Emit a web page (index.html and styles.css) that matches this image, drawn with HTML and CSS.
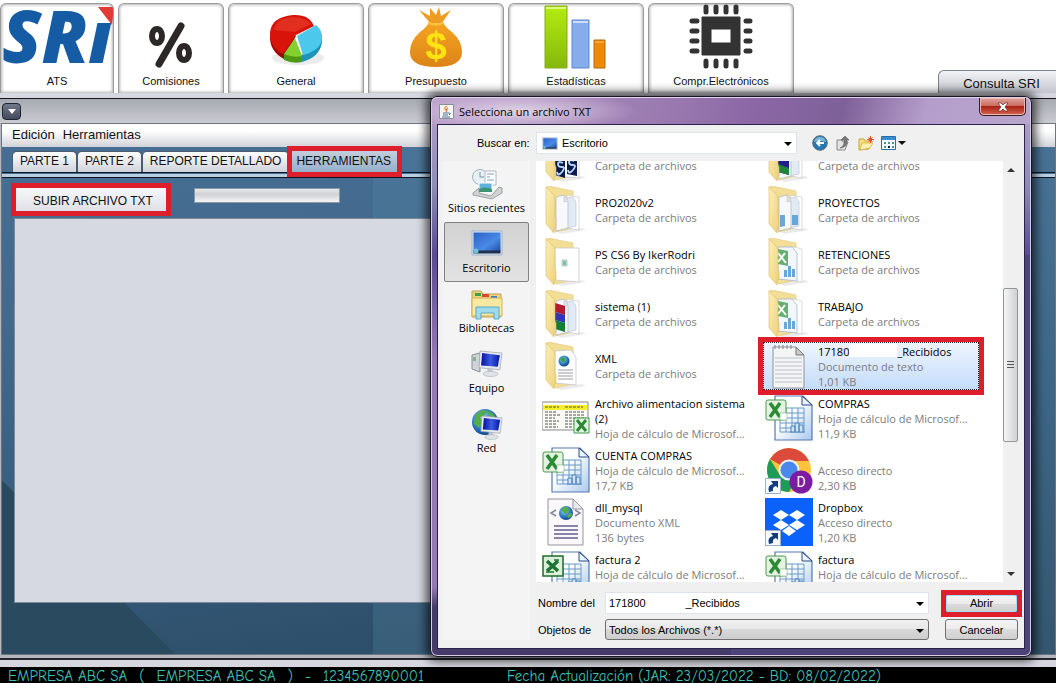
FILE: index.html
```html
<!DOCTYPE html>
<html lang="es">
<head>
<meta charset="utf-8">
<title>ATS - Herramientas</title>
<link rel="stylesheet" href="styles.css">
</head>
<body>
<svg class="defs" aria-hidden="true">
  <defs>
    <linearGradient id="gFlap" x1="0" x2="1" y1="0" y2="1"><stop offset="0" stop-color="#fdf0b4"/><stop offset="1" stop-color="#ecd07a"/></linearGradient>
    <linearGradient id="gSheet" x1="0" x2="1" y1="0" y2="1"><stop offset="0.4" stop-color="#ffffff"/><stop offset="1" stop-color="#a9c8ee"/></linearGradient>
    <linearGradient id="gScreen" x1="0" x2="1" y1="0" y2="1"><stop offset="0" stop-color="#2a62c4"/><stop offset="0.6" stop-color="#4a8ae8"/><stop offset="1" stop-color="#1c4c9c"/></linearGradient>
    <linearGradient id="gMonitor" x1="0" x2="1" y1="0" y2="0"><stop offset="0" stop-color="#0610a0"/><stop offset="0.5" stop-color="#3c5ce0"/><stop offset="1" stop-color="#0414a8"/></linearGradient>
    <radialGradient id="gGlobe" cx="0.4" cy="0.35" r="0.7"><stop offset="0" stop-color="#9ad8f8"/><stop offset="0.6" stop-color="#2a78c4"/><stop offset="1" stop-color="#0c3c84"/></radialGradient>
    <linearGradient id="gBag" x1="0" x2="0" y1="0" y2="1"><stop offset="0" stop-color="#f6a423"/><stop offset="1" stop-color="#dc8418"/></linearGradient>
    <linearGradient id="gGreen" x1="0" x2="0" y1="0" y2="1"><stop offset="0" stop-color="#b4ec10"/><stop offset="1" stop-color="#86b80c"/></linearGradient>
    <symbol id="back" viewBox="0 0 48 48">
      <path d="M12 45 40 42 44 44 20 48z" fill="#000" opacity=".08"/>
      <path d="M4 1 7 0 31 5 32 42 13 46z" fill="#f3de96" stroke="#e0c87c" stroke-width=".6"/>
    </symbol>
    <symbol id="flap" viewBox="0 0 48 48">
      <path d="M4 1 10 7Q13 9 13 12V31L14 33V41L12 43V47L4 38z" fill="url(#gFlap)" stroke="#d9bd66" stroke-width=".6"/>
    </symbol>
    <symbol id="papers" viewBox="0 0 48 48">
      <path d="M25 9 37 11V44L25 42z" fill="#fff" stroke="#c4c8cc" stroke-width=".7"/>
      <path d="M25 12 31 11 34 16V40L25 42z" fill="#e2ebf5" stroke="#b8c0ca" stroke-width=".6"/>
      <path d="M14 11 22 9 26 15V42L14 45z" fill="#f6f8fa" stroke="#b0b6bc" stroke-width=".7"/>
      <path d="M22 9V16L26 15" fill="#dfe5ec" stroke="#b0b6bc" stroke-width=".5"/>
    </symbol>
    <symbol id="onepaper" viewBox="0 0 48 48">
      <path d="M13 10 37 10V44L13 42z" fill="#fff" stroke="#c4c8cc" stroke-width=".8"/>
    </symbol>
    <symbol id="f-ps" viewBox="0 0 48 48"><use href="#back"/><use href="#onepaper"/><path d="M13 8 23 10V44L13 41zM25 10 35 10V42L25 40z" fill="#0a1a4c"/><path d="M21 29q-5-2-5 1t4 3 0 5-5 0M32 27q-5-2-5 1t4 3 0 5-5 0" fill="none" stroke="#b8d8f8" stroke-width="1.800"/><use href="#flap"/></symbol>
    <symbol id="f-img" viewBox="0 0 48 48"><use href="#back"/><use href="#papers"/><path d="M13 10 24 12V41L13 38z" fill="#20208c"/><path d="M13 30 24 34V41L13 38z" fill="#20843c"/><use href="#flap"/></symbol>
    <symbol id="f-papers" viewBox="0 0 48 48"><use href="#back"/><use href="#papers"/><use href="#flap"/></symbol>
    <symbol id="f-charts" viewBox="0 0 48 48"><use href="#back"/><use href="#papers"/><path d="M15 29h5v11l-5 1zM27 29h6v10h-6z" fill="#6aa6d8"/><use href="#flap"/></symbol>
    <symbol id="f-small" viewBox="0 0 48 48"><use href="#back"/><use href="#onepaper"/><path d="M20 22h5v6h-5z" fill="#d4ece4" stroke="#8abcae" stroke-width=".7"/><path d="M21 24h3M21 26h3" stroke="#2a8866"/><use href="#flap"/></symbol>
    <symbol id="f-rar" viewBox="0 0 48 48"><use href="#back"/><use href="#papers"/><path d="M13 13 23 16V25L13 22z" fill="#b01c30"/><path d="M13 22 23 25V33L13 30z" fill="#3434b4"/><path d="M13 30 23 33V42L13 39z" fill="#147c34"/><use href="#flap"/></symbol>
    <symbol id="f-xml" viewBox="0 0 48 48"><use href="#back"/><path d="M13 9 29 8 34 15V43L13 41z" fill="#fff" stroke="#c4c8cc" stroke-width=".8"/><circle cx="22" cy="19" r="5.500" fill="url(#gGlobe)"/><path d="M18 17q4-4 5 0t-3 3z" fill="#3aa04a"/><path d="M16 28h15M16 31h15M16 34h15M16 37h15" stroke="#9a9aa4"/><use href="#flap"/></symbol>
    <symbol id="f-xls" viewBox="0 0 48 48"><use href="#back"/><path d="M24 8 37 11V44L24 42z" fill="#fff" stroke="#c4c8cc" stroke-width=".6"/><path d="M13 9 27 9 32 15V43L13 41z" fill="#f2f7fc" stroke="#a8b6c6" stroke-width=".8"/><path d="M13 11 23 13V28L13 26z" fill="#64b070"/><path d="m13 15 8 10M20 15l-7 9" stroke="#fff" stroke-width="2"/><path d="M19 32h3v7h-3zM23 28h3v11h-3zM27 31h3v8h-3z" fill="#6aa6d8"/><use href="#flap"/></symbol>
    <symbol id="sheet" viewBox="0 0 48 48">
      <path d="M10 2H38L47 11V46H10z" fill="url(#gSheet)" stroke="#5478b4" stroke-width="1.200"/>
      <path d="M37 2V11H47z" fill="#eaf2fc" stroke="#2c4c84"/>
      <path d="M15 14H39V38H15zM15 19H39M15 24H39M15 29H39M15 34H39M21 14V38M27 14V38M33 14V38" fill="none" stroke="#6a9ac8"/>
      <path d="M26 38V32h4v6M30 38V29h4v9M34 38V31h4v7M25 38h15" fill="#cfe2f6" stroke="#4c84bc"/>
    </symbol>
    <symbol id="xl-new" viewBox="0 0 48 48"><use href="#sheet"/><rect x="1" y="6" width="20" height="20" rx="2" fill="#e4f2e2" stroke="#4c9a50"/><path d="m5 9 10 14M15 9 5 23" stroke="#2c8a34" stroke-width="3.500"/><path d="M15 19h7v7h-7z" fill="#fff" stroke="#7ab47c" stroke-width=".6"/></symbol>
    <symbol id="xl-old" viewBox="0 0 48 48"><use href="#sheet"/><rect x="1" y="6" width="20" height="20" fill="#dcefd8" stroke="#1c6c2c" stroke-width="1.500"/><path d="m5 11 11 10M16 11 5 21" stroke="#1c7434" stroke-width="3.500"/><path d="M4 22h8M12 10h5" stroke="#1c7434" stroke-width="1.500"/></symbol>
    <symbol id="shortcut" viewBox="0 0 16 16"><path d="M.5 .5h15v15H.5z" fill="#f6fafe" stroke="#9ab0c4"/><path d="M4 14Q2 7 8 6L6 3H13V10L11 8Q7 9 8 13z" fill="#123c7c"/></symbol>
    <symbol id="monitor" viewBox="0 0 24 26"><path d="M2 1 23 3 21 19 1 17z" fill="#e8ecf2" stroke="#a4aab4" stroke-width=".8"/><path d="M4 3 21 5 19 16 3 15z" fill="url(#gMonitor)"/><path d="M9 18h5v3H9z" fill="#c0c6cf"/><ellipse cx="12" cy="23" rx="7" ry="2.500" fill="#dfe3e8" stroke="#a8aeb8" stroke-width=".6"/></symbol>
    <symbol id="desktop" viewBox="0 0 32 26"><path d="M1 1h30v24H1z" fill="#d8e4f4" stroke="#a4b4cc"/><path d="M2.500 2.500h27v19h-27z" fill="url(#gScreen)"/><path d="M2.500 20.500h27v3h-27z" fill="#20304c"/><circle cx="5" cy="21" r="2.500" fill="#6cc0d8"/></symbol>
  </defs>
</svg>

<header class="toolbar">
  <button class="tool t-ats"><svg width="112" height="66" viewBox="0 0 112 66"><text x="1" y="60" class="sri">SRı</text><path d="M97 4H113L111 22z" fill="#e03a34"/></svg>ATS</button>
  <button class="tool t-com"><svg width="44" height="64" viewBox="0 0 44 64"><g fill="none" stroke="#2c2828"><ellipse cx="8" cy="31" rx="5" ry="7" stroke-width="6"/><ellipse cx="35" cy="48" rx="5" ry="7" stroke-width="6"/><path d="M32 21 10 59" stroke-width="7" stroke-linecap="round"/></g></svg>Comisiones</button>
  <button class="tool t-gen"><svg width="60" height="64" viewBox="0 -3 60 64"><ellipse cx="32" cy="50" rx="26" ry="7" fill="#000" opacity=".08"/><path d="M4 27Q3 43 18 51L30 28z" fill="#9c0c06"/><path d="M4 25Q4 40 17 46L30 27 48 18Q43 6 27 7 5 9 4 25z" fill="#d8140a"/><path d="M8 22Q10 10 27 9q12 0 18 7l-16 8z" fill="#e8402c" opacity=".6"/><path d="M18 46v6q9 4 18 2v-7z" fill="#4c9a14"/><path d="M29 30 18 46q9 4 18 2z" fill="#84d02c"/><path d="M36 47v7q18-5 20-20v-8z" fill="#1c94b8"/><path d="M31 28 50 17q6 5 6 12 0 13-19 18z" fill="#4cc8ec"/></svg>General</button>
  <button class="tool t-pre"><svg width="56" height="64" viewBox="0 0 56 64"><path d="M22 18 11 5l11 6 0-8 6 7 3-8 2 9 10-6-9 13z" fill="#ee9c22"/><path d="M21 17q7 3 14 0 2 5 9 10 10 9 10 20 0 15-26 15T2 47Q2 36 12 27q7-5 9-10z" fill="url(#gBag)"/><path d="M20 18q8 3 15 0" fill="none" stroke="#fcc43a" stroke-width="2"/><text x="28" y="54" class="money">$</text></svg>Presupuesto</button>
  <button class="tool t-est"><svg width="64" height="64" viewBox="0 0 64 64"><path d="M1 1h22v62H1z" fill="url(#gGreen)" stroke="#84ac18"/><path d="M2 3h20" stroke="#dcfa84" stroke-width="2"/><path d="M28 15h17v48H28z" fill="#86acec" stroke="#5c88d0"/><path d="M29 17h15" stroke="#d0e0fa" stroke-width="2"/><path d="M50 35h11v28H50z" fill="#ee8a08" stroke="#b8690c"/><path d="M51 37h9" stroke="#fac470"/></svg>Estadísticas</button>
  <button class="tool t-cpr"><svg width="66" height="66" viewBox="0 -1 66 66"><path d="M14 13h38v38H14zM23 25v14h20V25z" fill="#333" fill-rule="evenodd" stroke="#333" stroke-linejoin="round"/><path d="M18 3v5M28 3v5M38 3v5M48 3v5M18 57v5M28 57v5M38 57v5M48 57v5M4 17h5M4 27h5M4 37h5M4 47h5M58 17h4M58 27h4M58 37h4M58 47h4" stroke="#333" stroke-width="5" stroke-linecap="round"/></svg>Compr.Electrónicos</button>
  <button class="consulta">Consulta SRI</button>
</header>

<main class="frame">
  <div class="frame-title"><button class="frame-menu" aria-label="Menú de ventana"><svg width="8" height="5" viewBox="0 0 8 5"><path d="M0 0h8L4 5z" fill="#fff"/></svg></button></div>
  <div class="frame-inner">
    <nav class="menubar"><button>Edición</button><button>Herramientas</button></nav>
    <div class="tabs" role="tablist">
      <button role="tab">PARTE 1</button><button role="tab">PARTE 2</button><button role="tab">REPORTE DETALLADO</button><button role="tab" class="active marked" aria-selected="true">HERRAMIENTAS</button>
    </div>
    <section class="work">
      <div class="actions"><button class="upload marked">SUBIR ARCHIVO TXT</button><progress value="0" max="100" aria-label="Progreso"></progress></div>
      <div class="output"></div>
    </section>
  </div>
</main>

<footer class="status">
  <span>EMPRESA ABC SA</span><span>(</span><span>EMPRESA ABC SA</span><span>)</span><span>-</span><span>1234567890001</span>
  <span class="updated">Fecha Actualización (JAR: 23/03/2022 - BD: 08/02/2022)</span>
</footer>

<div class="dialog" role="dialog" aria-labelledby="dlg-title">
  <div class="dlg-bar">
    <svg width="15" height="15" viewBox="0 0 15 15"><path d="M.5.500h14v14H.5z" fill="#f6f4f2" stroke="#8890a0"/><path d="M8 2q-4 2-1 4 1 1 0 2M9 4q-2 1-1 3" fill="none" stroke="#e47c2c" stroke-width="1.200"/><path d="M4 9h6M4 11h5M3 13h8M10 9q3 0 0 2" fill="none" stroke="#50749c"/></svg>
    <h1 id="dlg-title">Selecciona un archivo TXT</h1>
    <button class="close" aria-label="Cerrar"><svg width="12" height="10" viewBox="0 0 12 10"><path d="M1 1h3l2 2 2-2h3L8 5l3 4H8L6 7 4 9H1l3-4z" fill="#fff" stroke="#5c3030" stroke-width=".7"/></svg></button>
  </div>
  <div class="dlg-body">
    <div class="lookup">
      <label for="folder">Buscar en:</label>
      <div class="combo folder"><svg width="16" height="13"><use href="#desktop"/></svg><select id="folder"><option>Escritorio</option></select></div>
      <div class="nav">
        <button aria-label="Atrás"><svg width="16" height="16" viewBox="0 0 16 16"><circle cx="8" cy="8" r="7.300" fill="#2578b0" stroke="#5c6c80"/><path d="M2 7Q3 2 8 2t6 5q-6-2-12 0z" fill="#9cd0ea" opacity=".7"/><path d="M12 8H5M8 5 5 8l3 3" fill="none" stroke="#fff" stroke-width="1.800"/></svg></button>
        <button aria-label="Subir un nivel"><svg width="16" height="16" viewBox="0 0 16 16"><path d="M2 5h5l1 2h5l-3 8H2z" fill="#e4e4e4" stroke="#888"/><path d="M5 13q5-2 4-8H6l4-4 4 4h-2q1 7-7 8z" fill="#777" stroke="#555" stroke-width=".5"/></svg></button>
        <button aria-label="Nueva carpeta"><svg width="16" height="16" viewBox="0 0 16 16"><path d="M1 4h5l1 2h6v2l-2 6-10 1z" fill="#f6dc84" stroke="#c8a43c"/><path d="m2 15 2-7h11l-3 5z" fill="#fdf0b0" stroke="#d0ac44" stroke-width=".7"/><path d="M12.500 1v7M9 4.500h7M10.500 2.500l4 4M14.500 2.500l-4 4" stroke="#e4501c"/></svg></button>
        <button aria-label="Vistas"><svg width="25" height="15" viewBox="0 0 25 15"><path d="M.5.500h14v13H.5z" fill="#f4faff" stroke="#2c6ca8"/><path d="M1 1h13v3H1z" fill="#3c8cd0"/><path d="M3 6h2v2H3zM7 6h2v2H7zM11 6h2v2h-2zM3 10h2v2H3zM11 10h2v2h-2z" fill="#54947c"/><path d="M7 10h2v2H7z" fill="#124"/><path d="M17 5h8l-4 4z" fill="#111"/></svg></button>
      </div>
    </div>
    <div class="dlg-main">
      <nav class="places">
        <button><svg width="32" height="32" viewBox="0 0 32 32"><circle cx="9" cy="9" r="7.500" fill="#e8f0f6" stroke="#a4b4c0"/><path d="M9 4v5h4" fill="none" stroke="#7890a4"/><path d="M14 3h11v14H14z" fill="#fff" stroke="#b0b8c0"/><path d="M16 6h7M16 9h3M16 12h7" stroke="#78a0c4"/><path d="M8 15h13v9H8z" fill="#5cb0dc" stroke="#fff"/><path d="M8 21q6-3 13 0v3H8z" fill="#3c9474"/><path d="m2 25 6-5v5l12 3 8-9 3 1v5l-10 6-19-4z" fill="#d0d2d4" stroke="#8c9094" stroke-width=".8"/></svg>Sitios recientes</button>
        <button class="current"><svg width="32" height="32" viewBox="0 0 32 32"><use href="#desktop" y="2" width="32" height="26"/></svg>Escritorio</button>
        <button><svg width="32" height="32" viewBox="0 0 32 32"><path d="M1 3h9l2 3h18v23H1z" fill="#ecd27c" stroke="#c0a450"/><path d="M4 5h6v3H4z" fill="#3ca04c"/><path d="M11 6h7v3h-7z" fill="#d84c2c"/><path d="M20 8h6v2h-6z" fill="#3c7cc0"/><path d="M1 10h30v18H1z" fill="#f8e8a0" stroke="#d0b458"/><path d="M5 19h23v12h-5v-6H10v6H5z" fill="#a0dcec" stroke="#58a8c4"/></svg>Bibliotecas</button>
        <button><svg width="32" height="32" viewBox="0 0 32 32"><path d="m1 7 8-2v19l-8-3z" fill="#d0d4d8" stroke="#888f98"/><path d="M2 10h3M2 12h3" stroke="#2c9c3c"/><use href="#monitor" x="7" y="1" width="25" height="29"/></svg>Equipo</button>
        <button><svg width="32" height="32" viewBox="0 0 32 32"><circle cx="14" cy="14" r="13" fill="url(#gGlobe)"/><path d="M4 8q6-8 12-5l-3 5-4 1 3 5-4 6-5-4zM16 3q7 1 9 8l-6-2z" fill="#54ac4c"/><use href="#monitor" x="9" y="6" width="23" height="27"/></svg>Red</button>
      </nav>
      <div class="right">
        <div class="files">
          <ul>
            <li><svg><use href="#f-ps"/></svg><p><b>&nbsp;</b>Carpeta de archivos</p></li>
            <li><svg><use href="#f-img"/></svg><p><b>&nbsp;</b>Carpeta de archivos</p></li>
            <li><svg><use href="#f-papers"/></svg><p><b>PRO2020v2</b>Carpeta de archivos</p></li>
            <li><svg><use href="#f-charts"/></svg><p><b>PROYECTOS</b>Carpeta de archivos</p></li>
            <li><svg><use href="#f-small"/></svg><p><b>PS CS6 By IkerRodri</b>Carpeta de archivos</p></li>
            <li><svg><use href="#f-xls"/></svg><p><b>RETENCIONES</b>Carpeta de archivos</p></li>
            <li><svg><use href="#f-rar"/></svg><p><b>sistema (1)</b>Carpeta de archivos</p></li>
            <li><svg><use href="#f-xls"/></svg><p><b>TRABAJO</b>Carpeta de archivos</p></li>
            <li><svg><use href="#f-xml"/></svg><p><b>XML</b>Carpeta de archivos</p></li>
            <li class="selected marked"><svg viewBox="0 0 48 48"><path d="M8 5H31L39 13V46H8z" fill="#f4f4f4" stroke="#909498"/><path d="M10 16h27M10 20h27M10 24h27M10 28h27M10 32h27M10 36h27M10 40h27" stroke="#b8c0ca"/><path d="M31 5v8h8z" fill="#ccc" stroke="#777"/><path d="M10 3v4M14 3v4M18 3v4M22 3v4M26 3v4" stroke="#888"/></svg><p><b>17180<i></i>_Recibidos</b>Documento de texto<br>1,01 KB</p></li>
            <li><svg viewBox="0 0 48 48"><path d="M0 8h46v28H0z" fill="#fafaf6" stroke="#888"/><path d="M1 11h44v5H1z" fill="#f6ee2c"/><path d="M3 13h14M23 13h18M3 18h12M3 21h15M3 24h10M3 27h14M3 30h11M3 33h13M23 18h20M23 21h19M23 24h21M23 27h18M23 30h10M23 33h8" stroke="#55554c" stroke-width="1.200" stroke-dasharray="3 1"/><path d="M32 24h15v15H32z" fill="#e4f4e2" stroke="#3c9a44"/><path d="m35 26 9 11M44 26l-9 11" stroke="#2c8a34" stroke-width="3"/></svg><p><b>Archivo alimentacion sistema (2)</b>Hoja de cálculo de Microsof...</p></li>
            <li><svg><use href="#xl-new"/></svg><p><b>COMPRAS</b>Hoja de cálculo de Microsof...<br>11,9 KB</p></li>
            <li><svg><use href="#xl-new"/></svg><p><b>CUENTA COMPRAS</b>Hoja de cálculo de Microsof...<br>17,7 KB</p></li>
            <li><svg viewBox="0 0 48 48"><circle cx="24" cy="24" r="22" fill="#fbc43c"/><path d="M24 24 5 13A22 22 0 0 1 44 15H24z" fill="#dc4a3c"/><path d="M5 13A22 22 0 0 0 24 46l8-15-16 0z" fill="#1c9c58"/><circle cx="24" cy="24" r="10.500" fill="#f0f4fa"/><circle cx="24" cy="24" r="8.500" fill="#4a88ec"/><circle cx="36" cy="36" r="11.500" fill="#7c1ca0"/><text x="36" y="41" class="avatar">D</text><use href="#shortcut" x="0" y="32" width="16" height="16"/></svg><p><b>&nbsp;</b>Acceso directo<br>2,30 KB</p></li>
            <li><svg viewBox="0 0 48 48"><path d="M6 1H31L41 11V47H6z" fill="#faf8fa" stroke="#98949c"/><path d="M31 1V11H41z" fill="#ececf0" stroke="#98949c"/><circle cx="24" cy="15" r="7" fill="url(#gGlobe)"/><path d="M19 12q4-6 7-2t-3 6zM25 18q4-5 5-2t-4 4z" fill="#54ac4c"/><path d="m14 12-5 3 5 3M33 12l5 3-5 3" fill="none" stroke="#88889c" stroke-width="1.500"/><path d="M12 28h24M12 32h24M12 36h24M12 40h24" stroke="#8884a8" stroke-width="2"/></svg><p><b>dll_mysql</b>Documento XML<br>136 bytes</p></li>
            <li><svg viewBox="0 0 48 48"><path d="M0 0h48v48H0z" fill="#0a62fa"/><path d="m16 12 8 5-8 5-8-5zM32 12l8 5-8 5-8-5zM16 22l8 5-8 5-8-5zM32 22l8 5-8 5-8-5zM24 28l7 5-7 5-7-5z" fill="#fff"/><use href="#shortcut" x="0" y="32" width="16" height="16"/></svg><p><b>Dropbox</b>Acceso directo<br>1,20 KB</p></li>
            <li><svg><use href="#xl-old"/></svg><p><b>factura 2</b>Hoja de cálculo de Microsof...<br>&nbsp;</p></li>
            <li><svg><use href="#xl-new"/></svg><p><b>factura</b>Hoja de cálculo de Microsof...<br>&nbsp;</p></li>
          </ul>
          <div class="scroll"><span class="up"></span><span class="thumb"></span><span class="down"></span></div>
        </div>
        <form class="fields">
          <label for="name">Nombre del</label>
          <div class="combo"><input id="name" value="171800&nbsp;&nbsp;&nbsp;&nbsp;&nbsp;&nbsp;&nbsp;&nbsp;&nbsp;&nbsp;&nbsp;&nbsp;&nbsp;_Recibidos"></div>
          <button type="button" class="open marked">Abrir</button>
          <label for="type">Objetos de</label>
          <div class="combo type"><select id="type"><option>Todos los Archivos (*.*)</option></select></div>
          <button type="button">Cancelar</button>
        </form>
      </div>
    </div>
  </div>
</div>
</body>
</html>
```

FILE: styles.css
```css
* { box-sizing: border-box; }
body {
  margin: 0; min-height: 100vh; display: flex; flex-direction: column;
  position: relative; overflow: hidden; background: #d6d7df;
  font-family: "Liberation Sans", Arial, sans-serif; font-size: 12px; color: #111;
}
button, input, select { font: inherit; color: inherit; margin: 0; padding: 0; border: 0; background: none; }
svg { display: block; flex: none; }
.defs { position: absolute; width: 0; height: 0; }
.marked { position: relative; }
.marked::after { content: ""; position: absolute; inset: -5px; border: 5px solid #de1f2b; pointer-events: none; }

/* Main toolbar */
.toolbar { display: flex; gap: 4px; height: 94px; padding-top: 3px; background: #fff; border-bottom: 1px solid #d4d6de; }
.tool {
  display: flex; flex-direction: column; align-items: center; justify-content: flex-end; gap: 5px;
  width: 136px; padding-bottom: 5px; font-size: 11px; line-height: 14px;
  border: 1px solid #9c9c9c; border-bottom: 0; border-radius: 6px 6px 0 0;
  background: #fff; box-shadow: inset 0 0 3px 1px #b4b4b4; overflow: hidden;
}
.t-ats { width: 114px; }
.t-com { width: 106px; }
.t-cpr { width: 146px; }
.sri { font: italic 800 72px "Open Sans", sans-serif; fill: #165ca4; }
.money { font: 700 38px "Liberation Sans", sans-serif; fill: #fce414; text-anchor: middle; }
.consulta {
  margin-left: auto; align-self: flex-end; width: 118px; height: 23px; padding: 2px 0 0 8px; font-size: 13px;
  border: 1px solid #7c808a; border-width: 1px 0 0 1px; border-radius: 6px 0 0 0;
  background: linear-gradient(#f2f3f6, #c2c5ce);
}

/* Internal window */
.frame { flex: 1; display: flex; flex-direction: column; margin-top: 4px; border-top: 1px solid #16161a; border-bottom: 2px solid #26262c; background: #b4b7c0; padding-bottom: 3px; }
.frame-title { display: flex; align-items: center; height: 24px; padding-left: 2px; background: linear-gradient(#a6a9b1, #c9cbd1); }
.frame-menu { display: flex; align-items: center; justify-content: center; width: 19px; height: 17px; border: 1px solid #20242e; border-radius: 4px; background: linear-gradient(#70788a, #424a5c); }
.frame-inner {
  flex: 1; display: flex; flex-direction: column; margin-left: 1px; border: 1px solid #6e7480;
  background:
    linear-gradient(45deg, #2a4a60 0 123px, transparent 123px),
    linear-gradient(90deg, transparent 371px, rgba(90, 140, 170, .25) 371px),
    linear-gradient(170deg, #476f95 0%, #42698c 30%, #355b7c 60%, #28455c 100%);
}
.menubar { display: flex; gap: 8px; height: 23px; padding: 0 0 2px 10px; font-size: 13px; background: linear-gradient(#fff 30%, #d2d3d9); }
.tabs { display: flex; padding: 4px 0 0 10px; border-bottom: 1px solid #0c1420; }
.tabs button { height: 21px; padding: 0 7px 2px; background: linear-gradient(#fff, #cfd2da); border: 1px solid #4c5c70; border-bottom: 0; border-radius: 5px 5px 0 0; }
.tabs .active { background: linear-gradient(#c4cedb, #93b0cb); margin-left: 3px; padding: 0 6px 2px 4px; border: 0; border-radius: 0; }
.work { flex: 1; display: flex; flex-direction: column; margin-top: 1px; padding: 11px 30px 51px 12px; border-top: 3px solid #b8cfe2; box-shadow: inset 0 1px #0c1420; }
.actions { display: flex; align-items: flex-start; gap: 28px; padding-left: 2px; }
.upload { width: 150px; height: 23px; padding: 2px 0 0 4px; background: linear-gradient(#f6f7fa, #dfe1e8); }
progress { appearance: none; width: 146px; height: 15px; border: 1px solid #8c98a4; background: linear-gradient(#e8e8ea, #cfd1d4 40%, #f4f4f6); }
progress::-webkit-progress-bar { background: none; }
.output { flex: 1; margin-top: 7px; border: 1px solid #7e8a9a; background: #d6d9e1; }

/* Status line */
.status { display: flex; margin-top: 7px; height: 16px; padding-left: 8px; gap: 12px; background: #000; color: #3fc0b6; font: 15px/18px "Comic Sans MS", "Comic Neue", "DejaVu Sans", sans-serif; white-space: nowrap; overflow: hidden; }
.updated { margin-left: 71px; }

/* File dialog */
.dialog {
  position: absolute; left: 430px; top: 96px; width: 602px; padding: 0 6px 7px;
  border: 1px solid #1a1626; border-radius: 7px;
  background: linear-gradient(90deg, transparent 50%, #4c4378 50%) 0 158px / 100% 100% no-repeat,
    linear-gradient(#b9a2cc, #8c8cb4 90px, #5a4a94 158px, #9478b4 260px, #9478b4 490px, #453c6c 510px);
  box-shadow: inset 0 0 0 1px #d8cce4, 0 0 10px 4px rgba(0, 0, 0, .65);
  font-family: "Open Sans", "Segoe UI", sans-serif; font-size: 11px; color: #000;
}
.dlg-bar {
  display: flex; align-items: center; gap: 5px; height: 27px; margin: 0 -5px; padding: 0 0 0 7px;
  border-radius: 6px 6px 0 0; border-top: 1px solid #e0d4ea;
  background: radial-gradient(ellipse 120px 20px at 85px 13px, #dfd2e6, transparent),
    linear-gradient(105deg, #b79bc8 0, #9878ae 240px, #8c68a6 310px, #7e6198 400px, #b49dca 480px, #b8a6ce);
}
.dlg-bar h1 { flex: 1; margin: 0; font-size: 11px; font-weight: 400; }
.close { align-self: flex-start; display: flex; align-items: center; justify-content: center; width: 47px; height: 18px; margin-right: 4px; border: 1px solid #3a1c24; border-top: 0; border-radius: 0 0 5px 5px; background: linear-gradient(#e0a49c, #cc6c60 45%, #a82414 50%, #d46450); box-shadow: inset 0 0 0 1px #eab8b0; }
.dlg-body { padding: 7px 6px 8px 5px; border: 1px solid #2a2248; background: #f0f0f0; }
.lookup { display: flex; align-items: center; height: 22px; padding-left: 34px; }
.lookup label, .combo, .fields { font-family: "Liberation Sans", Arial, sans-serif; font-size: 11px; }
.lookup label { width: 51px; margin-right: 8px; white-space: nowrap; }
.combo { position: relative; display: flex; align-items: center; height: 22px; background: #fff; border: 1px solid #dfe3ea; }
.combo select, .combo input { appearance: none; flex: 1; min-width: 0; height: 100%; padding-left: 3px; outline: 0; }
.combo::after { content: ""; position: absolute; right: 4px; top: 9px; border: 4px solid transparent; border-top-color: #000; border-bottom: 0; pointer-events: none; }
.folder { width: 261px; padding-left: 5px; }
.folder select { padding-left: 4px; }
.nav { display: flex; align-items: center; gap: 7px; margin-left: 15px; }
.dlg-main { display: flex; gap: 6px; margin-top: 7px; }
.places { width: 87px; padding: 1px 1px 0; background: #f4f4f4; }
.places button { display: flex; flex-direction: column; align-items: center; width: 85px; height: 60px; padding-top: 5px; border: 1px solid transparent; line-height: 15px; white-space: nowrap; }
.places .current { border-color: #808080; border-radius: 2px; background: linear-gradient(#d2d2d2, #e2e2e2); }
.right { flex: 1; }
.files { display: flex; height: 421px; overflow: hidden; background: #fff; }
.files ul { flex: 1; display: grid; grid-template-columns: 223px 1fr; grid-auto-rows: 52px; margin: -29px 0 0; padding: 0 0 0 6px; list-style: none; }
.files li { display: flex; align-items: center; gap: 5px; }
.files li > svg { width: 48px; height: 48px; }
.files p { margin: 0; width: 160px; line-height: 15px; color: #7c7c7c; }
.files b { display: block; font-weight: 400; color: #000; }
.files i { display: inline-block; width: 48px; height: 13px; background: #fff; vertical-align: top; }
.files .selected { width: 216px; height: 48px; margin-top: 2px; margin-left: -2px; padding-left: 2px; background: linear-gradient(#eef5fe, #c4dcfa); outline: 1px dotted #222; outline-offset: -1px; }
.avatar { font: 14px Roboto, sans-serif; fill: #fff; text-anchor: middle; }
.scroll { display: flex; flex-direction: column; align-items: center; width: 15px; background: #f0f0f0; }
.up, .down { border: 4px solid transparent; }
.up { margin-top: 3px; border-bottom-color: #333; }
.down { margin: auto 0 2px; border-top-color: #333; }
.thumb { width: 15px; height: 154px; margin-top: 116px; border: 1px solid #94989c; border-radius: 2px; background: repeating-linear-gradient(#555 0 1px, transparent 1px 3px) center / 7px 8px no-repeat, linear-gradient(90deg, #f6f6f6, #cfd0d2); }
.fields { display: grid; grid-template-columns: 67px 324px 73px; gap: 5px 0; align-items: center; margin-top: 10px; padding-left: 2px; }
.fields .combo { width: 324px; }
.fields button { width: 73px; height: 21px; margin-left: 16px; border: 1px solid #707070; border-radius: 3px; background: linear-gradient(#f4f4f4, #ebebeb 50%, #dcdcdc 50%, #cfcfcf); }
.fields .open { height: 19px; border-color: #3c7fb1; box-shadow: inset 0 0 0 1px #9ce0f8; }
.fields .type { height: 21px; border: 1px solid #707070; border-radius: 3px; background: linear-gradient(#f0f0f0, #e6e6e6 50%, #d8d8d8 50%, #cdcdcd); }
```
